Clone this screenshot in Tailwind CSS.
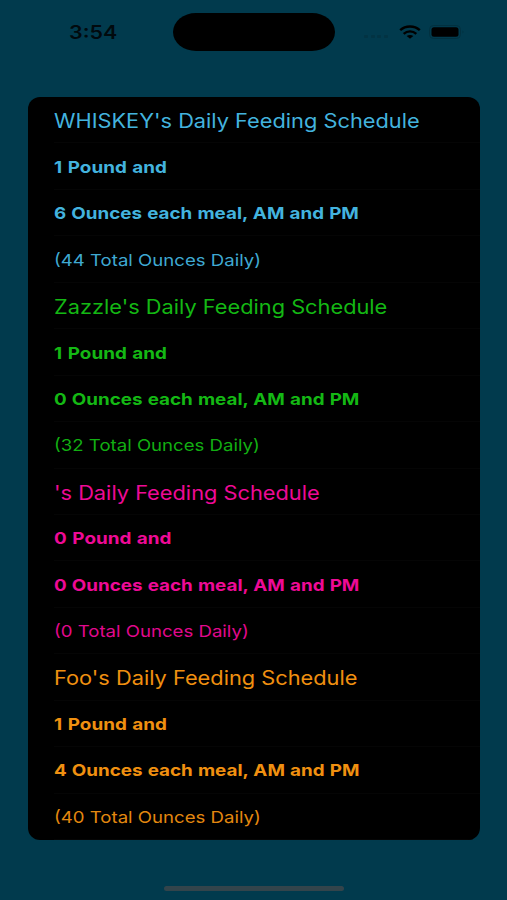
<!DOCTYPE html>
<html lang="en">
    <head>
        <meta charset="UTF-8">
        <meta name="viewport" content="width=device-width, initial-scale=1.0">
        <title>Daily Feeding Schedule</title>
        <script src="https://cdn.jsdelivr.net/npm/@tailwindcss/browser@4"></script>
    </head>
    <body class="bg-[#013a4d] font-['Inter','Liberation_Sans',sans-serif] w-[507px] h-[900px] overflow-hidden flex flex-col">
        <!-- Status bar -->
        <header class="h-[97px] shrink-0 pt-[13px] flex items-start">
            <div class="w-[173px] h-[38px] pl-[69px] flex items-center text-[#010a0e]">
                <span class="text-[18px] font-semibold origin-left scale-x-[1.19]">3:54</span>
            </div>
            <div class="w-[162px] h-[38px] rounded-[23px/19px] bg-black"></div>
            <div class="h-[38px] pl-[29px] flex items-center">
                <svg class="w-[24px] h-[4px] mt-[9px]" viewBox="0 0 24 4" fill="#023343">
                    <rect x="0" y="0" width="4" height="3" rx="1"/>
                    <rect x="7" y="0" width="4" height="3" rx="1"/>
                    <rect x="13" y="0" width="4" height="3" rx="1"/>
                    <rect x="20" y="0" width="4" height="3" rx="1"/>
                </svg>
                <svg class="w-[22px] h-[14px] ml-[11px]" viewBox="0 0 22 14" fill="none" stroke="#000" stroke-width="2.4">
                    <path d="M1.2 5.2C6.5 .2 15.500 .2 20.800 5.200"/>
                    <path d="M4.700 8.800C8.300 5.500 13.700 5.500 17.300 8.800"/>
                    <path d="M11 13.800L7.700 11C9.600 9.500 12.400 9.500 14.300 11Z" fill="#000" stroke="none"/>
                </svg>
                <svg class="w-[36px] h-[14px] ml-[8px]" viewBox="0 0 36 14">
                    <rect x=".5" y=".5" width="31" height="13" rx="4" fill="none" stroke="#02303f"/>
                    <rect x="2.500" y="2.200" width="27" height="9.600" rx="2.500" fill="#000"/>
                    <path d="M33.500 5.500v3c1.300-.6 1.300-2.400 0-3z" fill="#02303f"/>
                </svg>
            </div>
        </header>
        <!-- Schedule list -->
        <main id="schedule" class="mx-[28px] w-[452px] h-[743px] shrink-0 rounded-[12px] bg-black grid grid-rows-16 overflow-hidden"></main>
        <!-- Home indicator -->
        <footer class="flex-1 pt-[46px]">
            <div class="ml-[164px] w-[180px] h-[5px] rounded-full bg-[#33444b]"></div>
        </footer>
        <script>
        const dogs = [
            { name: "WHISKEY", pounds: 1, ounces: 6, total: 44, color: "text-[#43b3de]" },
            { name: "Zazzle", pounds: 1, ounces: 0, total: 32, color: "text-[#14b814]" },
            { name: "", pounds: 0, ounces: 0, total: 0, color: "text-[#ee0a96]" },
            { name: "Foo", pounds: 1, ounces: 4, total: 40, color: "text-[#f09010]" }
        ];

        const titleText = "inline-block whitespace-nowrap origin-left pt-[4px] text-[19.5px] scale-x-[1.117]";
        const poundText = "inline-block whitespace-nowrap origin-left pt-[2px] text-[16.5px] font-bold [font-kerning:none] [word-spacing:0.9px] scale-x-[1.143]";
        const boldText = "inline-block whitespace-nowrap origin-left pt-[2px] text-[16.5px] font-bold [word-spacing:0.6px] scale-x-[1.14]";
        const bodyText = "inline-block whitespace-nowrap origin-left pt-[2px] text-[16.5px] scale-x-[1.127] opacity-95";

        function row(text, style, color) {
            return `
                <div class="pl-[26px] flex min-h-0">
                    <div class="flex-1 flex items-center border-b border-[#050505] ${color}">
                        <span class="${style}">${text}</span>
                    </div>
                </div>
            `;
        }

        document.getElementById("schedule").innerHTML = dogs.map(dog =>
            row(`${dog.name}'s Daily Feeding Schedule`, titleText, dog.color) +
            row(`${dog.pounds} Pound and`, poundText, dog.color) +
            row(`${dog.ounces} Ounces each meal, AM and PM`, boldText, dog.color) +
            row(`(${dog.total} Total Ounces Daily)`, bodyText, dog.color)
        ).join("");
        </script>
    </body>
</html>
